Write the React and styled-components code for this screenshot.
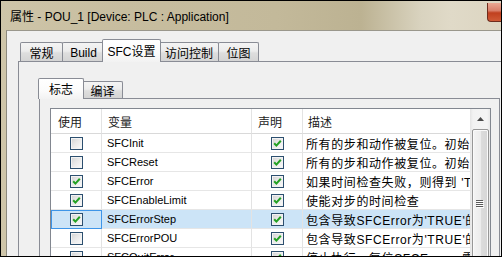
import React from 'react';
import styled, { createGlobalStyle, css } from 'styled-components';

const GlobalStyle = createGlobalStyle`
  html, body {
    margin: 0;
    padding: 0;
    background: #000;
  }
  body {
    font-family: "Liberation Sans", "Noto Sans CJK SC", sans-serif;
  }
`;

const Screen = styled.div`
  width: 502px;
  height: 257px;
  box-sizing: border-box;
  padding: 1px;
  background: #000;
`;

const Window = styled.div`
  height: 100%;
  display: flex;
  flex-direction: column;
  overflow: hidden;
  background: linear-gradient(
    90deg,
    #cec5a9 0%,
    #c7bd9f 25%,
    #c3b99a 55%,
    #bcb292 72%,
    #d9d3bf 84%,
    #e0dac8 90%,
    #dcd5c1 100%
  );
`;

const TitleBar = styled.div`
  height: 29px;
  flex-shrink: 0;
  display: flex;
  align-items: flex-start;
`;

const Title = styled.div`
  padding: 8px 0 0 9px;
  font-size: 12px;
  line-height: 16px;
  color: #000;
  white-space: nowrap;
`;

const CloseButton = styled.div`
  margin: 2px 0 0 auto;
  width: 14px;
  height: 19px;
  flex-shrink: 0;
  box-sizing: border-box;
  border: 1px solid #6e2c1c;
  border-top: none;
  border-right: none;
  border-radius: 0 0 0 4px;
  background: linear-gradient(#eaa893 0%, #d9806a 42%, #c0401f 55%, #cf5a36 100%);
`;

const Frame = styled.div`
  flex: 1;
  min-height: 0;
  display: flex;
  padding-left: 5px;
`;

const Client = styled.div`
  flex: 1;
  min-width: 0;
  overflow: hidden;
  display: flex;
  flex-direction: column;
  padding: 8px 0 0 11px;
  background: #f0f0f0;
  border-top: 1px solid #9a978c;
  border-left: 1px solid #8d8a7e;
`;

const TabStrip = styled.div`
  position: relative;
  z-index: 1;
  flex-shrink: 0;
  display: flex;
  align-items: flex-end;
  height: ${p => p.$h}px;
  padding-left: ${p => p.$indent}px;
`;

const Tab = styled.div`
  box-sizing: border-box;
  width: ${p => p.$w}px;
  height: ${p => p.$h}px;
  margin-right: -1px;
  display: flex;
  align-items: center;
  justify-content: center;
  padding-top: 1px;
  border: 1px solid #898c95;
  border-bottom: none;
  border-radius: 2px 2px 0 0;
  font-size: 12px;
  color: #000;
  white-space: nowrap;
  background: linear-gradient(#f4f4f4 0%, #ececec 45%, #dedede 55%, #d4d4d4 100%);

  ${p =>
    p.$active &&
    css`
      position: relative;
      z-index: 2;
      margin: 0 -2px -1px -2px;
      padding-top: 0;
      padding-bottom: 2px;
      background: linear-gradient(#ffffff 0%, #fbfbfb 60%, #f2f2f2 100%);
    `}
`;

const OuterPanel = styled.div`
  flex: 1;
  width: 540px;
  display: flex;
  flex-direction: column;
  padding: 16px 0 0 20px;
  border: 1px solid #898c95;
  background: #f0f0f0;
`;

const InnerPanel = styled.div`
  flex: 1;
  width: 461px;
  box-sizing: border-box;
  padding: 9px 8px 0 10px;
  border: 1px solid #898c95;
  background: #f0f0f0;
`;

const ListBox = styled.div`
  width: 441px;
  height: 230px;
  box-sizing: border-box;
  display: flex;
  border: 1px solid #828790;
  background: #fff;
`;

const Grid = styled.div`
  flex: 1;
  min-width: 0;
`;

const RowLine = styled.div`
  display: grid;
  grid-template-columns: 51px 150px 51px 1fr;
  height: ${p => (p.$header ? 25 : 19)}px;
  background: ${p => (p.$selected ? '#cce4f7' : '#fff')};
`;

const Cell = styled.div`
  box-sizing: border-box;
  min-width: 0;
  overflow: hidden;
  white-space: nowrap;
  display: flex;
  align-items: center;
  justify-content: ${p => (p.$center ? 'center' : 'flex-start')};
  padding-left: ${p => (p.$center ? 0 : p.$cjk ? 3 : 5)}px;
  border-right: ${p => (p.$last ? 'none' : '1px solid #e3e3e3')};
  border-bottom: 1px solid ${p => (p.$header ? '#d9d9d9' : '#e6e6e6')};
  color: #000;
  font-size: ${p => (p.$cjk ? 12 : 11)}px;
  letter-spacing: ${p => (p.$cjk ? '0.6px' : 0)};

  ${p =>
    p.$focus &&
    css`
      outline: 1px solid #3d95e8;
      outline-offset: -1px;
    `}
`;

const HeadLabel = styled.span`
  font-size: 12px;
  color: #1b1b1b;
  padding-left: ${p => p.$pad}px;
`;

const Box = styled.span`
  width: 13px;
  height: 13px;
  box-sizing: border-box;
  display: flex;
  align-items: center;
  justify-content: center;
  border: 1px solid #2c4f6f;
  background: linear-gradient(135deg, #d2d2d2 0%, #e8e8e8 45%, #fbfbfb 100%);
  box-shadow: inset 0 0 0 1px #f3f3f3;
`;

const Scrollbar = styled.div`
  width: 20px;
  flex-shrink: 0;
  display: flex;
  flex-direction: column;
  align-items: center;
  background: linear-gradient(90deg, #e4e4e4 0%, #f2f2f2 15%, #f4f4f4 85%, #e8e8e8 100%);
`;

const ArrowButton = styled.div`
  height: 20px;
  display: flex;
  align-items: center;
  justify-content: center;
`;

const Thumb = styled.div`
  width: 17px;
  height: 150px;
  flex-shrink: 0;
  box-sizing: border-box;
  display: flex;
  align-items: center;
  justify-content: center;
  border: 1px solid #979797;
  border-radius: 2px;
  background: linear-gradient(90deg, #f4f4f4 0%, #ececec 50%, #dcdcdc 55%, #d6d6d6 100%);
  box-shadow: inset 0 0 0 1px #fafafa;
`;

const CheckBox = ({ checked }) => (
  <Box>
    {checked && (
      <svg width="9" height="9" viewBox="0 0 9 9">
        <path d="M1.2 4.2 L3.4 6.6 L7.8 1.8" fill="none" stroke="#23a123" strokeWidth="2" />
      </svg>
    )}
  </Box>
);

const rows = [
  { name: 'SFCInit', use: false, decl: true, desc: '所有的步和动作被复位。初始步被激活' },
  { name: 'SFCReset', use: false, decl: true, desc: '所有的步和动作被复位。初始步被激活' },
  { name: 'SFCError', use: true, decl: true, desc: "如果时间检查失败，则得到 'TRUE'" },
  { name: 'SFCEnableLimit', use: true, decl: true, desc: '使能对步的时间检查' },
  { name: 'SFCErrorStep', use: true, decl: true, desc: "包含导致SFCError为'TRUE'的步骤名称", selected: true },
  { name: 'SFCErrorPOU', use: false, decl: true, desc: "包含导致SFCError为'TRUE'的POU名称" },
  { name: 'SFCQuitError', use: false, decl: true, desc: '停止执行，复位SFCError。需要置位' },
  { name: 'SFCPause', use: false, decl: true, desc: '暂停执行' },
];

const App = () => {
  return (
    <Screen>
      <GlobalStyle />
      <Window>
        <TitleBar>
          <Title>属性 - POU_1 [Device: PLC : Application]</Title>
          <CloseButton />
        </TitleBar>
        <Frame>
          <Client>
            <TabStrip $h={22} $indent={2}>
              <Tab $w={43} $h={19}>常规</Tab>
              <Tab $w={43} $h={19}>Build</Tab>
              <Tab $w={59} $h={23} $active>SFC设置</Tab>
              <Tab $w={60} $h={19}>访问控制</Tab>
              <Tab $w={41} $h={19}>位图</Tab>
            </TabStrip>
            <OuterPanel>
              <TabStrip $h={20} $indent={1}>
                <Tab $w={46} $h={21} $active>标志</Tab>
                <Tab $w={41} $h={17}>编译</Tab>
              </TabStrip>
              <InnerPanel>
                <ListBox>
                  <Grid>
                    <RowLine $header>
                      <Cell $header><HeadLabel $pad={2}>使用</HeadLabel></Cell>
                      <Cell $header><HeadLabel $pad={1}>变量</HeadLabel></Cell>
                      <Cell $header><HeadLabel $pad={1}>声明</HeadLabel></Cell>
                      <Cell $header $last><HeadLabel $pad={0}>描述</HeadLabel></Cell>
                    </RowLine>
                    {rows.map(r => (
                      <RowLine key={r.name} $selected={r.selected}>
                        <Cell $center $focus={r.selected}>
                          <CheckBox checked={r.use} />
                        </Cell>
                        <Cell>{r.name}</Cell>
                        <Cell $center>
                          <CheckBox checked={r.decl} />
                        </Cell>
                        <Cell $cjk $last>{r.desc}</Cell>
                      </RowLine>
                    ))}
                  </Grid>
                  <Scrollbar>
                    <ArrowButton>
                      <svg width="7" height="4" viewBox="0 0 7 4">
                        <polygon points="3.5,0 7,4 0,4" fill="#4a4a4a" />
                      </svg>
                    </ArrowButton>
                    <Thumb>
                      <svg width="8" height="8" viewBox="0 0 8 8">
                        <g fill="#5a5a5a">
                          <rect x="0" y="0" width="7" height="1" />
                          <rect x="0" y="2" width="7" height="1" />
                          <rect x="0" y="4" width="7" height="1" />
                          <rect x="0" y="6" width="7" height="1" />
                        </g>
                        <g fill="#ffffff">
                          <rect x="1" y="1" width="7" height="1" />
                          <rect x="1" y="3" width="7" height="1" />
                          <rect x="1" y="5" width="7" height="1" />
                          <rect x="1" y="7" width="7" height="1" />
                        </g>
                      </svg>
                    </Thumb>
                  </Scrollbar>
                </ListBox>
              </InnerPanel>
            </OuterPanel>
          </Client>
        </Frame>
      </Window>
    </Screen>
  );
};

export default App;
